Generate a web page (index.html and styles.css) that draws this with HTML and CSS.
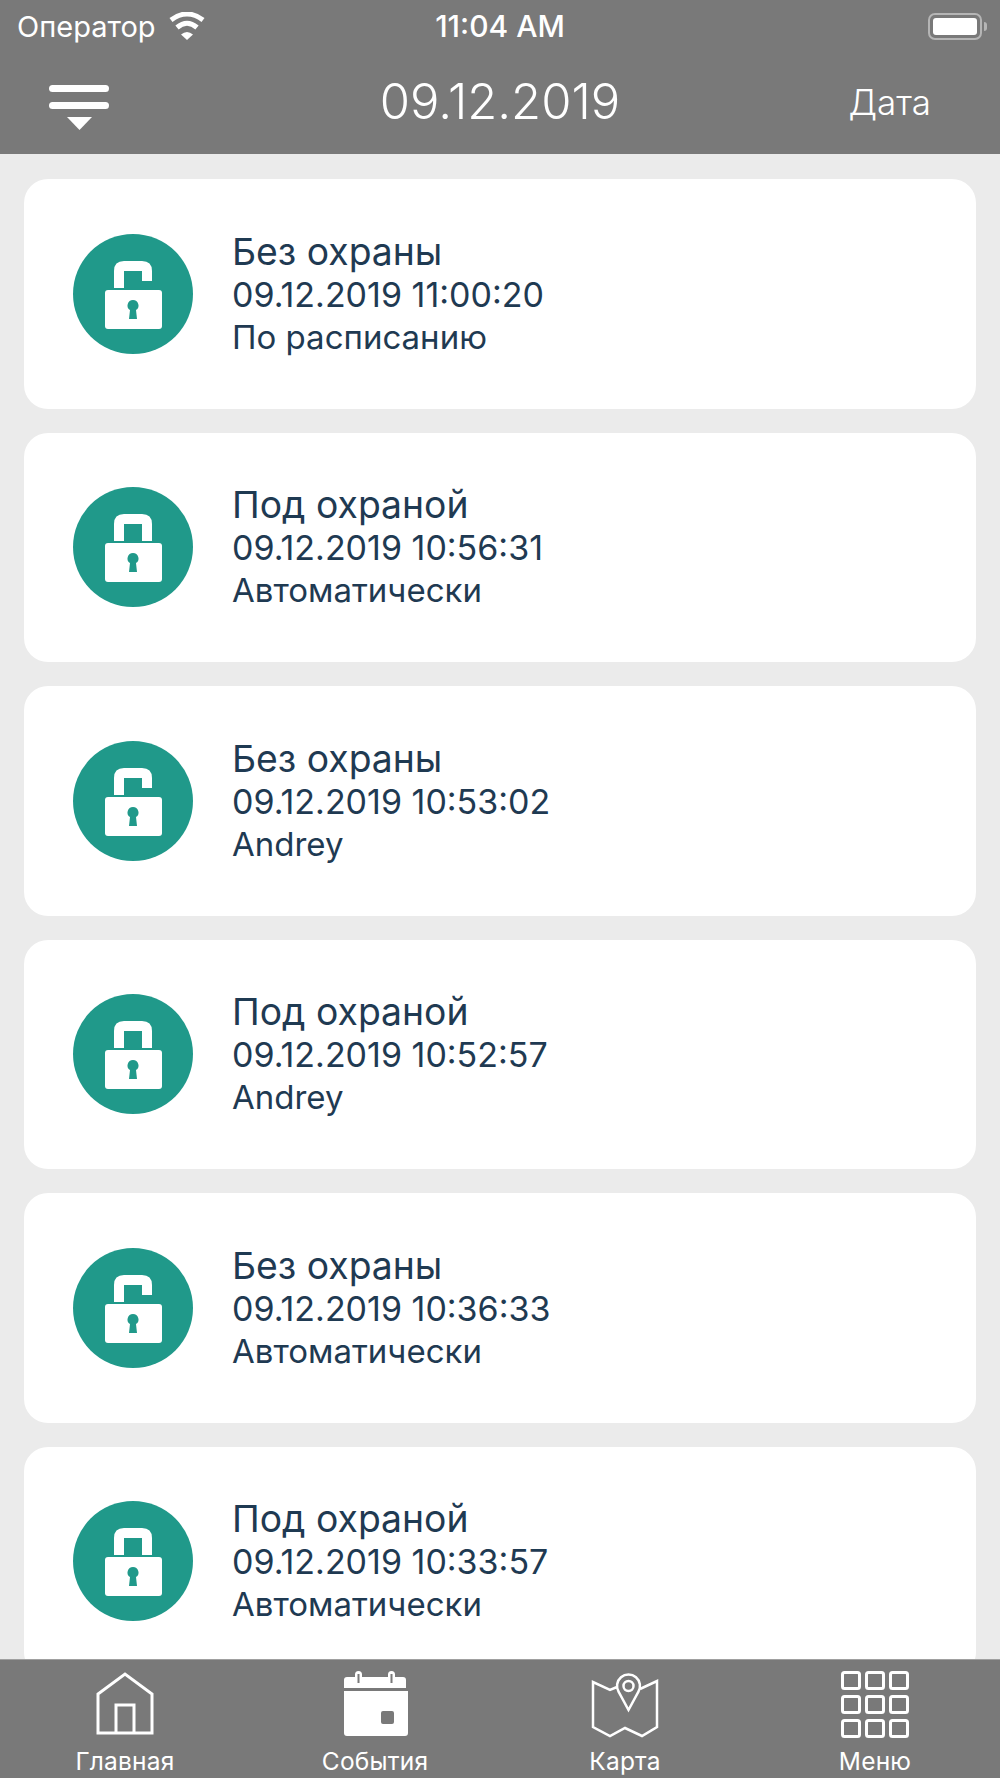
FILE: index.html
```html
<!DOCTYPE html>
<html lang="ru">
<head>
    <meta charset="UTF-8">
    <meta name="viewport" content="width=device-width, initial-scale=1.0">
    <title>События</title>
    <link rel="stylesheet" href="styles.css">
</head>
<body>
    <svg class="sprite" width="0" height="0">
        <symbol id="lock-open" viewBox="0 0 120 120">
            <circle cx="60" cy="60" r="60" fill="#20998a"/>
            <path d="M41 54V37q0-10 10-10h18q10 0 10 10v10H69V37H51v17z" fill="#fff"/>
            <rect x="32" y="56" width="57" height="39" rx="3" fill="#fff"/>
            <path d="M60 66a5.500 5.500 0 0 1 3 10.100l1 8.900h-8l1-8.900a5.500 5.500 0 0 1 3-10.100z" fill="#20998a"/>
        </symbol>
        <symbol id="lock-closed" viewBox="0 0 120 120">
            <circle cx="60" cy="60" r="60" fill="#20998a"/>
            <path d="M41 54V37q0-10 10-10h18q10 0 10 10v17H69V37H51v17z" fill="#fff"/>
            <rect x="32" y="56" width="57" height="39" rx="3" fill="#fff"/>
            <path d="M60 66a5.500 5.500 0 0 1 3 10.100l1 8.900h-8l1-8.900a5.500 5.500 0 0 1 3-10.100z" fill="#20998a"/>
        </symbol>
    </svg>

    <div class="screen">
        <header class="topbar">
            <div class="status">
                <div class="status-left">
                    <span>Оператор</span>
                    <svg class="wifi" viewBox="0 0 38 28">
                        <path d="M3 8Q19-4 35 8" fill="none" stroke="#fff" stroke-width="5"/>
                        <path d="M9 15.500Q19 7 29 15.500" fill="none" stroke="#fff" stroke-width="5"/>
                        <path d="M13 22.500Q19 17.500 25 22.500L19 28z" fill="#fff"/>
                    </svg>
                </div>
                <div class="status-time">11:04 AM</div>
                <div class="status-right">
                    <div class="battery"><div class="battery-fill"></div></div>
                    <div class="battery-tip"></div>
                </div>
            </div>
            <div class="navrow">
                <svg class="filter" viewBox="0 0 60 46">
                    <rect x="0" y="0" width="60" height="7" rx="3.500" fill="#fff"/>
                    <rect x="0" y="17" width="60" height="7" rx="3.500" fill="#fff"/>
                    <path d="M18 32h25L30.500 45z" fill="#fff"/>
                </svg>
                <div class="nav-title">09.12.2019</div>
                <div class="nav-action">Дата</div>
            </div>
        </header>

        <main class="list">
            <div class="card">
                <svg class="card-icon"><use href="#lock-open"/></svg>
                <div class="card-text">
                    <div class="card-title">Без охраны</div>
                    <div class="card-date">09.12.2019 11:00:20</div>
                    <div class="card-note">По расписанию</div>
                </div>
            </div>
            <div class="card">
                <svg class="card-icon"><use href="#lock-closed"/></svg>
                <div class="card-text">
                    <div class="card-title">Под охраной</div>
                    <div class="card-date">09.12.2019 10:56:31</div>
                    <div class="card-note">Автоматически</div>
                </div>
            </div>
            <div class="card">
                <svg class="card-icon"><use href="#lock-open"/></svg>
                <div class="card-text">
                    <div class="card-title">Без охраны</div>
                    <div class="card-date">09.12.2019 10:53:02</div>
                    <div class="card-note">Andrey</div>
                </div>
            </div>
            <div class="card">
                <svg class="card-icon"><use href="#lock-closed"/></svg>
                <div class="card-text">
                    <div class="card-title">Под охраной</div>
                    <div class="card-date">09.12.2019 10:52:57</div>
                    <div class="card-note">Andrey</div>
                </div>
            </div>
            <div class="card">
                <svg class="card-icon"><use href="#lock-open"/></svg>
                <div class="card-text">
                    <div class="card-title">Без охраны</div>
                    <div class="card-date">09.12.2019 10:36:33</div>
                    <div class="card-note">Автоматически</div>
                </div>
            </div>
            <div class="card">
                <svg class="card-icon"><use href="#lock-closed"/></svg>
                <div class="card-text">
                    <div class="card-title">Под охраной</div>
                    <div class="card-date">09.12.2019 10:33:57</div>
                    <div class="card-note">Автоматически</div>
                </div>
            </div>
        </main>

        <nav class="tabbar">
            <div class="tab">
                <svg class="tab-icon" viewBox="0 0 70 70">
                    <path d="M8 63V24L35 4l27 20v39zM26 63V35h18v28" fill="none" stroke="#fff" stroke-width="3"/>
                </svg>
                <span>Главная</span>
            </div>
            <div class="tab">
                <svg class="tab-icon" viewBox="0 0 70 70">
                    <path d="M4 18v-8q0-3 3-3h8V4.500a3.500 3.500 0 0 1 7 0V7h26V4.500a3.500 3.500 0 0 1 7 0V7h8q3 0 3 3v8z" fill="#fff"/>
                    <rect x="17.500" y="4" width="2" height="9" fill="#797979"/>
                    <rect x="50.500" y="4" width="2" height="9" fill="#797979"/>
                    <path d="M4 21h64v42q0 3-3 3H7q-3 0-3-3zM41 43v9q0 2 2 2h9q2 0 2-2v-9q0-2-2-2h-9q-2 0-2 2z" fill="#fff" fill-rule="evenodd"/>
                </svg>
                <span>События</span>
            </div>
            <div class="tab">
                <svg class="tab-icon" viewBox="0 0 70 70">
                    <path d="M27 17l-7 3L3 12v45l17 9 15-8 17 8 15-9V11l-17 8" fill="none" stroke="#fff" stroke-width="2.500"/>
                    <path d="M38.500 40L28.700 22A11.500 11.500 0 1 1 48.300 22z" fill="none" stroke="#fff" stroke-width="2.500"/>
                    <circle cx="38.500" cy="16" r="5" fill="none" stroke="#fff" stroke-width="2.500"/>
                </svg>
                <span>Карта</span>
            </div>
            <div class="tab">
                <svg class="tab-icon" viewBox="0 0 70 70">
                    <g fill="none" stroke="#fff" stroke-width="3">
                        <rect x="2.500" y="2.500" width="17" height="16" rx="2"/>
                        <rect x="26.500" y="2.500" width="17" height="16" rx="2"/>
                        <rect x="50.500" y="2.500" width="17" height="16" rx="2"/>
                        <rect x="2.500" y="26.500" width="17" height="16" rx="2"/>
                        <rect x="26.500" y="26.500" width="17" height="16" rx="2"/>
                        <rect x="50.500" y="26.500" width="17" height="16" rx="2"/>
                        <rect x="2.500" y="50.500" width="17" height="16" rx="2"/>
                        <rect x="26.500" y="50.500" width="17" height="16" rx="2"/>
                        <rect x="50.500" y="50.500" width="17" height="16" rx="2"/>
                    </g>
                </svg>
                <span>Меню</span>
            </div>
        </nav>
    </div>
</body>
</html>
```

FILE: styles.css
```css
* {
    box-sizing: border-box;
}
html, body {
    margin: 0;
    padding: 0;
}
body {
    font-family: Inter, "Liberation Sans", sans-serif;
    background: #ebebeb;
}
.sprite {
    display: block;
    height: 0;
}
.screen {
    width: 1000px;
    height: 1778px;
    display: flex;
    flex-direction: column;
    overflow: hidden;
}
.topbar {
    height: 154px;
    flex-shrink: 0;
    background: #797979;
    color: white;
}
.status {
    height: 52px;
    padding: 0 13px 0 17px;
    display: flex;
    align-items: center;
    justify-content: space-between;
    font-size: 29px;
}
.status-left {
    display: flex;
    align-items: center;
    gap: 12px;
    width: 296px;
}
.wifi {
    width: 38px;
    height: 28px;
}
.status-time {
    font-size: 30px;
    font-weight: 500;
}
.status-right {
    width: 300px;
    display: flex;
    align-items: center;
    justify-content: flex-end;
    gap: 2px;
}
.battery {
    width: 54px;
    height: 27px;
    padding: 3px;
    border: 2px solid #b5b5b5;
    border-radius: 7px;
}
.battery-fill {
    height: 100%;
    background: white;
    border-radius: 3px;
}
.battery-tip {
    width: 3px;
    height: 9px;
    background: #b5b5b5;
    border-radius: 0 3px 3px 0;
}
.navrow {
    height: 102px;
    display: grid;
    grid-template-columns: 250px 1fr 250px;
    align-items: center;
}
.filter {
    width: 60px;
    height: 46px;
    margin: 10px 0 0 49px;
}
.nav-title {
    font-size: 49px;
    font-weight: 300;
    text-align: center;
    margin-bottom: 3px;
}
.nav-action {
    font-size: 35px;
    font-weight: 300;
    text-align: right;
    padding-right: 69px;
    margin-bottom: 2px;
}
.list {
    flex: 1;
    min-height: 0;
    padding: 25px 24px 0;
    display: flex;
    flex-direction: column;
    gap: 24px;
    overflow: hidden;
}
.card {
    height: 229.500px;
    flex-shrink: 0;
    padding-left: 49px;
    display: flex;
    align-items: center;
    gap: 39px;
    background: white;
    border-radius: 24px;
}
.card-icon {
    width: 120px;
    height: 120px;
    flex-shrink: 0;
}
.card-text {
    color: #1f3a52;
    padding-top: 1px;
}
.card-title {
    font-size: 37.300px;
    line-height: 42px;
}
.card-date {
    font-size: 34px;
    line-height: 42px;
    margin-top: 1px;
}
.card-note {
    font-size: 33px;
    line-height: 42px;
}
.tabbar {
    height: 119px;
    flex-shrink: 0;
    background: #797979;
    border-top: 1px solid #a0a0a0;
    display: flex;
    color: white;
}
.tab {
    width: 250px;
    display: flex;
    flex-direction: column;
    align-items: center;
    padding-top: 10px;
    font-size: 24.500px;
    letter-spacing: 0.2px;
}
.tab-icon {
    width: 70px;
    height: 70px;
    margin-bottom: 6px;
}
```
